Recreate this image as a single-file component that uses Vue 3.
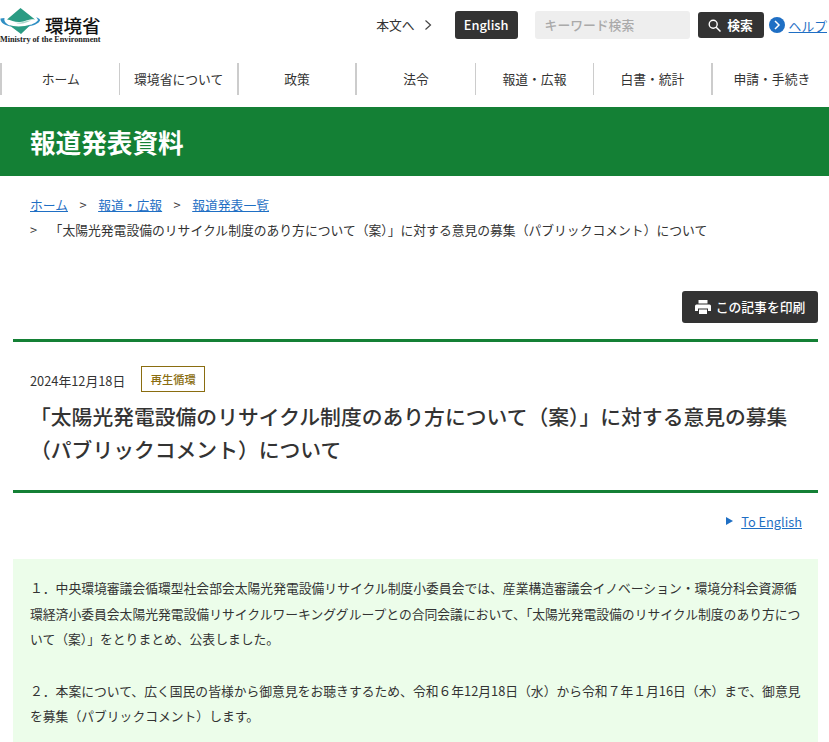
<script setup>
const navItems = ['ホーム', '環境省について', '政策', '法令', '報道・広報', '白書・統計', '申請・手続き']
</script>

<template>
  <div class="page">
    <header class="top">
      <a class="logo">
        <svg class="mark" width="42" height="34" viewBox="0 0 42 34">
          <path d="M20.500 1 L35 12.500 C29 11 26 14.500 20 15 C15 15.500 11 13 7 12.500 Z" fill="#2a9b83" />
          <path d="M9 18 C14 20 24 20 31 17.500 L21 27 Z" fill="#2a9b83" />
          <path d="M15 15.500 C20 17 26 13 31 13.500 C26 16 20 18 15 15.500 Z" fill="#a8d8cb" />
          <path d="M0.500 11.500 C0 15.500 5 19 12 19.500 C7 17.500 3.500 15 4.500 11 Z" fill="#2f8fc4" />
          <path d="M36 10 C38 11 40.500 12 40 13.500 C39 16.500 33 19 27 19.500 C32 17.500 37.500 15 38 13 C37.500 12 37 11 36 10 Z" fill="#2f8fc4" />
        </svg>
        <span class="logo-ja">環境省</span>
        <span class="logo-en">Ministry of the Environment</span>
      </a>
      <div class="tools">
        <a class="skip">本文へ<svg width="8" height="12" viewBox="0 0 8 12"><path d="M1.500 1.500 L6.500 6 L1.500 10.500" fill="none" stroke="#444" stroke-width="1.200" /></svg></a>
        <a class="english">English</a>
        <div class="search-input">キーワード検索</div>
        <a class="search-btn">
          <svg width="13" height="13" viewBox="0 0 13 13"><circle cx="5.200" cy="5.200" r="4" fill="none" stroke="#fff" stroke-width="1.400" /><path d="M8.200 8.200 L12.500 12.500" stroke="#fff" stroke-width="1.500" /></svg>
          <span>検索</span>
        </a>
        <a class="help">
          <svg width="16" height="16" viewBox="0 0 16 16"><circle cx="8" cy="8" r="8" fill="#1f6fc4" /><path d="M6 4 L10 8 L6 12" fill="none" stroke="#fff" stroke-width="1.500" /></svg>
          <span>ヘルプ</span>
        </a>
      </div>
    </header>

    <nav class="nav">
      <a v-for="item in navItems" :key="item" class="nav-item">{{ item }}</a>
    </nav>

    <div class="banner">報道発表資料</div>

    <div class="crumbs">
      <div class="crumb-row">
        <a>ホーム</a><i>&gt;</i><a>報道・広報</a><i>&gt;</i><a>報道発表一覧</a>
      </div>
      <div class="crumb-row current">
        <i>&gt;</i><span>「太陽光発電設備のリサイクル制度のあり方について（案）」に対する意見の募集（パブリックコメント）について</span>
      </div>
    </div>

    <main class="content">
      <div class="print-row">
        <a class="print">
          <svg width="16" height="14" viewBox="0 0 16 14"><path d="M3.500 0 H12.500 V3.500 H3.500 Z" fill="#fff" /><path d="M1.500 4.500 H14.500 A1.500 1.500 0 0 1 16 6 V11 H13 V8.500 H3 V11 H0 V6 A1.500 1.500 0 0 1 1.500 4.500 Z" fill="#fff" /><path d="M4 9.500 H12 V14 H4 Z" fill="#fff" /></svg>
          <span>この記事を印刷</span>
        </a>
      </div>

      <section class="heading">
        <div class="meta">
          <span class="date">2024年12月18日</span>
          <span class="tag">再生循環</span>
        </div>
        <h1>「太陽光発電設備のリサイクル制度のあり方について（案）」に対する意見の募集（パブリックコメント）について</h1>
      </section>

      <div class="lang">
        <svg width="7" height="8" viewBox="0 0 7 8"><path d="M0 0 L7 4 L0 8 Z" fill="#1f6fc4" /></svg>
        <a>To English</a>
      </div>

      <section class="notice">
        <p>１．中央環境審議会循環型社会部会太陽光発電設備リサイクル制度小委員会では、産業構造審議会イノベーション・環境分科会資源循環経済小委員会太陽光発電設備リサイクルワーキンググループとの合同会議において、「太陽光発電設備のリサイクル制度のあり方について（案）」をとりまとめ、公表しました。</p>
        <p>２．本案について、広く国民の皆様から御意見をお聴きするため、令和６年12月18日（水）から令和７年１月16日（木）まで、御意見を募集（パブリックコメント）します。</p>
      </section>
    </main>
  </div>
</template>

<style scoped>
.page {
  width: 829px;
  height: 742px;
  overflow: hidden;
  background: #fff;
  color: #333;
  font-family: "Noto Sans CJK JP", "Noto Sans", sans-serif;
  font-size: 12.8px;
}
a { cursor: pointer; }
.top {
  height: 63px;
  display: flex;
  justify-content: space-between;
}
.logo {
  position: relative;
  display: block;
  width: 102px;
  height: 44px;
  margin-top: 6px;
}
.mark { position: absolute; left: 0; top: 1px; }
.logo-ja {
  position: absolute;
  left: 45px;
  top: 10px;
  font-size: 18.500px;
  font-weight: 500;
  line-height: 19px;
  color: #111;
}
.logo-en {
  position: absolute;
  left: 0;
  top: 29px;
  font-family: "Liberation Serif", serif;
  font-weight: 700;
  font-size: 8.200px;
  line-height: 10px;
  white-space: nowrap;
  color: #222;
}
.tools {
  display: flex;
  align-items: flex-start;
  padding-top: 11px;
}
.skip {
  display: flex;
  align-items: center;
  gap: 9px;
  height: 27px;
  margin-right: 23px;
  color: #333;
}
.english {
  width: 63px;
  height: 28px;
  line-height: 27px;
  text-align: center;
  background: #333;
  color: #fff;
  border-radius: 3px;
  font-weight: 500;
  margin-right: 17px;
}
.search-input {
  width: 155px;
  height: 28px;
  line-height: 28px;
  padding-left: 10px;
  box-sizing: border-box;
  background: #eee;
  border-radius: 3px;
  color: #aaa;
  font-weight: 500;
  margin-right: 8px;
}
.search-btn {
  width: 66px;
  height: 26px;
  margin-top: 1px;
  display: flex;
  align-items: center;
  justify-content: center;
  gap: 6px;
  background: #333;
  color: #fff;
  border-radius: 3px;
  font-weight: 700;
  margin-right: 5px;
}
.search-btn span { line-height: 25px; height: 25px; margin-top: -2px; }
.help {
  display: flex;
  align-items: center;
  gap: 4px;
  height: 28px;
  color: #1f6fc4;
  margin-right: 2px;
}
.help span { text-decoration: underline; }
.nav {
  height: 32px;
  display: flex;
  border-left: 2px solid #ccc;
}
.nav-item {
  width: 118.450px;
  flex: none;
  box-sizing: border-box;
  border-right: 1px solid #ccc;
  line-height: 32px;
  text-align: center;
  color: #333;
}
.nav-item:nth-child(2),
.nav-item:nth-child(3),
.nav-item:nth-child(6) { border-right-width: 2px; }
.nav-item:last-child { border-right: 0; }
.banner {
  margin-top: 12px;
  height: 69px;
  line-height: 69px;
  padding-left: 30px;
  background: #148035;
  color: #fff;
  font-size: 25.600px;
  font-weight: 700;
}
.crumbs {
  padding: 16px 30px 0;
  line-height: 22px;
}
.crumb-row {
  display: flex;
  height: 25px;
  align-items: center;
}
.crumb-row a { color: #1f6fc4; text-decoration: underline; }
.crumb-row i { font-style: normal; margin: 0 11.500px; }
.current i { margin: 0 12.500px 0 0; }
.current { white-space: nowrap; }
.content { padding: 0 11px 0 13px; }
.print-row {
  display: flex;
  justify-content: flex-end;
  padding-top: 49px;
}
.print {
  width: 136px;
  height: 32px;
  display: flex;
  align-items: center;
  justify-content: center;
  gap: 5px;
  background: #333;
  color: #fff;
  border-radius: 3px;
  font-weight: 500;
}
.print span { margin-top: -2px; }
.heading {
  margin-top: 16px;
  border-top: 3px solid #148035;
  border-bottom: 3px solid #148035;
  padding: 24px 17px 23px;
  height: 154px;
  box-sizing: border-box;
}
.meta { display: flex; align-items: center; gap: 16px; }
.date { font-size: 12.800px; margin-top: 2px; }
.tag {
  width: 64px;
  height: 26px;
  box-sizing: border-box;
  line-height: 24px;
  text-align: center;
  border: 1px solid #8a6d10;
  color: #8a6d10;
  font-size: 11.200px;
  font-weight: 500;
}
h1 {
  margin: 8px 0 0;
  font-size: 20.800px;
  line-height: 33.280px;
  font-weight: 500;
}
.lang {
  display: flex;
  align-items: center;
  justify-content: flex-end;
  gap: 8px;
  padding: 16px 16px 0 0;
  height: 24px;
}
.lang a { color: #1f6fc4; text-decoration: underline; }
.notice {
  margin-top: 26px;
  padding: 16px 17px 0;
  background: #ecfdea;
  height: 190px;
  line-height: 25.600px;
}
.notice p { margin: 0 0 26px; }
</style>
